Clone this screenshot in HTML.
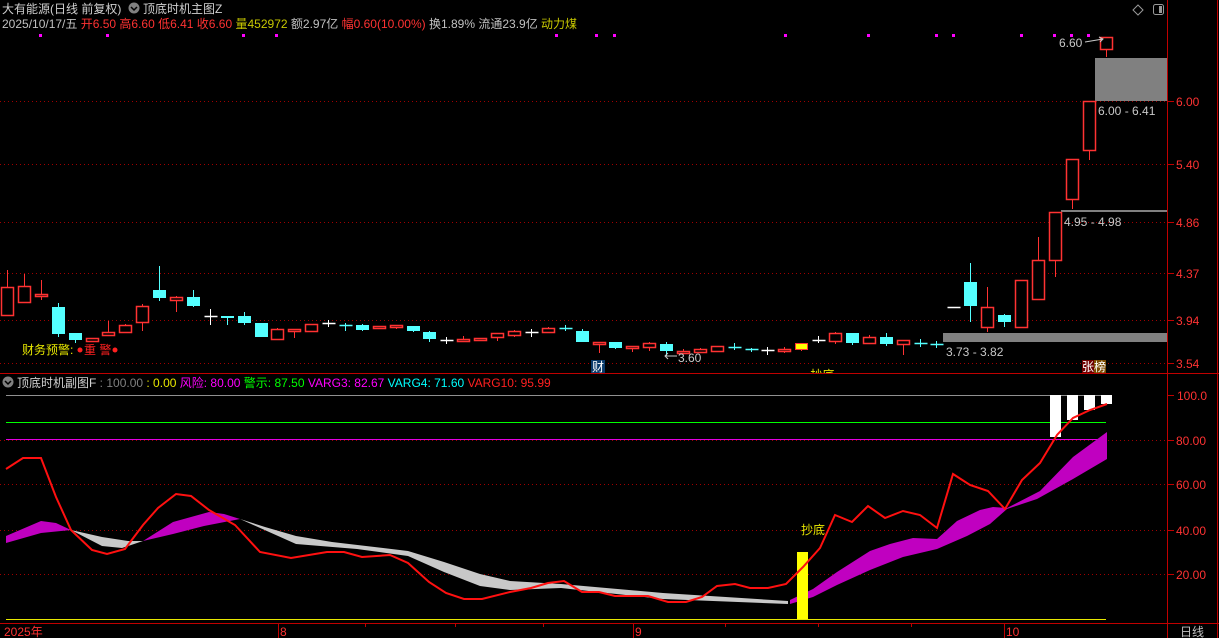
<!DOCTYPE html>
<html><head><meta charset="utf-8">
<style>
html,body{margin:0;padding:0;background:#000;}
body{width:1219px;height:638px;overflow:hidden;position:relative;font-family:"Liberation Sans","Noto Sans CJK SC",sans-serif;font-size:12px;}
svg{position:absolute;left:0;top:0;}
svg text{font-family:"Liberation Sans","Noto Sans CJK SC",sans-serif;font-size:12px;}
</style></head><body>
<svg id="s" width="1219" height="638" viewBox="0 0 1219 638" xmlns="http://www.w3.org/2000/svg">
<defs><clipPath id="cp"><rect x="0" y="0" width="1219" height="373"/></clipPath></defs>
<line x1="1167.5" y1="0" x2="1167.5" y2="638" stroke="#c00000"/>
<line x1="1217.5" y1="0" x2="1217.5" y2="638" stroke="#c00000"/>
<line x1="0" y1="373.5" x2="1219" y2="373.5" stroke="#c00000"/>
<line x1="0" y1="623.5" x2="1219" y2="623.5" stroke="#c00000"/>
<g stroke="#a00000" stroke-dasharray="1,3">
<line x1="0" y1="101.5" x2="1167" y2="101.5"/><line x1="0" y1="164.5" x2="1167" y2="164.5"/>
<line x1="0" y1="222.5" x2="1167" y2="222.5"/><line x1="0" y1="273.5" x2="1167" y2="273.5"/>
<line x1="0" y1="320.5" x2="1167" y2="320.5"/><line x1="0" y1="363.5" x2="1167" y2="363.5"/>
<line x1="0" y1="440.5" x2="1167" y2="440.5"/><line x1="0" y1="484.5" x2="1167" y2="484.5"/>
<line x1="0" y1="530.5" x2="1167" y2="530.5"/><line x1="0" y1="574.5" x2="1167" y2="574.5"/>
</g>
<g stroke="#c00000">
<line x1="1167" y1="101.5" x2="1174" y2="101.5"/><line x1="1167" y1="164.5" x2="1174" y2="164.5"/>
<line x1="1167" y1="222.5" x2="1174" y2="222.5"/><line x1="1167" y1="273.5" x2="1174" y2="273.5"/>
<line x1="1167" y1="320.5" x2="1174" y2="320.5"/><line x1="1167" y1="363.5" x2="1174" y2="363.5"/>
<line x1="1167" y1="395.5" x2="1174" y2="395.5"/><line x1="1167" y1="440.5" x2="1174" y2="440.5"/>
<line x1="1167" y1="484.5" x2="1174" y2="484.5"/><line x1="1167" y1="530.5" x2="1174" y2="530.5"/>
<line x1="1167" y1="574.5" x2="1174" y2="574.5"/>
<line x1="278.5" y1="623" x2="278.5" y2="638"/><line x1="633.5" y1="623" x2="633.5" y2="638"/><line x1="1004.5" y1="623" x2="1004.5" y2="638"/>
<line x1="365.5" y1="623" x2="365.5" y2="627"/><line x1="455.5" y1="623" x2="455.5" y2="627"/><line x1="543.5" y1="623" x2="543.5" y2="627"/><line x1="725.5" y1="623" x2="725.5" y2="627"/><line x1="818.5" y1="623" x2="818.5" y2="627"/><line x1="911.5" y1="623" x2="911.5" y2="627"/>
</g>
<g fill="#ff3232" font-size="13">
<text x="1176" y="106">6.00</text><text x="1176" y="169">5.40</text><text x="1176" y="227">4.86</text>
<text x="1176" y="278">4.37</text><text x="1176" y="325">3.94</text><text x="1176" y="368">3.54</text>
<text x="1177" y="400">100.0</text><text x="1176" y="445">80.00</text><text x="1176" y="489">60.00</text>
<text x="1176" y="535">40.00</text><text x="1176" y="579">20.00</text>
<text x="4" y="636">2025年</text><text x="280" y="636">8</text><text x="635" y="636">9</text><text x="1006" y="636">10</text>
</g>
<text x="1180" y="636" fill="#c0c0c0" font-size="13">日线</text>
<text x="2" y="13" fill="#d0d0d0" font-size="13">大有能源(日线 前复权)</text>
<circle cx="134" cy="8" r="5.5" fill="#808080"/><path d="M131 7 l3 3 l3 -3" stroke="#000" stroke-width="1.5" fill="none"/>
<text x="143" y="13" fill="#d0d0d0" font-size="13">顶底时机主图Z</text>
<text x="2" y="28" font-size="12.8"><tspan fill="#c0c0c0">2025/10/17/五 </tspan><tspan fill="#ff3232">开6.50 高6.60 低6.41 收6.60 </tspan><tspan fill="#c8c800">量452972 </tspan><tspan fill="#c0c0c0">额2.97亿 </tspan><tspan fill="#ff3232">幅0.60(10.00%) </tspan><tspan fill="#c0c0c0">换1.89% 流通23.9亿 </tspan><tspan fill="#c8c800">动力煤</tspan></text>
<path d="M1138 5 l5 5 l-5 5 l-5 -5z" stroke="#999" fill="none"/>
<rect x="1153.5" y="4.5" width="10" height="10" rx="2" stroke="#999" fill="none"/><rect x="1159" y="6" width="3" height="7" fill="#999"/>
<g id="dots" fill="#ff00ff"></g>
<rect x="1095" y="58" width="72" height="43" fill="#808080"/>
<rect x="1061" y="210" width="106" height="2" fill="#808080"/>
<rect x="943" y="333" width="224" height="9" fill="#808080"/>
<g id="candles"></g>
<g fill="#c8c8c8" font-size="12.5">
<text x="1059" y="47">6.60</text>
<text x="1098" y="115">6.00 - 6.41</text>
<text x="1064" y="226">4.95 - 4.98</text>
<text x="946" y="356">3.73 - 3.82</text>
<text x="678" y="362">3.60</text>
</g>
<path d="M1085 42 l18 -3 M1099 37 l4 2 l-3 3" stroke="#c8c8c8" fill="none"/>
<path d="M665 356 h12 M668 353 l-3 3 l3 3" stroke="#c8c8c8" fill="none"/>
<text x="22" y="354" fill="#e8e800" font-size="12.5">财务预警:</text>
<circle cx="80" cy="350" r="2.5" fill="#ff2020"/><text x="84" y="354" fill="#ff2020" font-size="12.5">重 警</text><circle cx="115" cy="350" r="2.5" fill="#ff2020"/>
<rect x="591" y="360" width="14" height="13" fill="#0a3a6a"/><text x="592" y="371" fill="#fff" font-size="12">财</text>
<rect x="1082" y="360" width="12" height="13" fill="#700000"/><rect x="1094" y="360" width="12" height="13" fill="#7a4a00"/>
<text x="1082" y="371" fill="#fff" font-size="12">张榜</text>
<text x="803" y="379" fill="#e8e800" font-size="12" clip-path="url(#cp)">- 抄底</text>
<circle cx="8" cy="382" r="5.5" fill="#808080"/><path d="M5 381 l3 3 l3 -3" stroke="#000" stroke-width="1.5" fill="none"/>
<text x="17" y="387" font-size="12.5"><tspan fill="#d0d0d0">顶底时机副图F </tspan><tspan fill="#808080">: 100.00 </tspan><tspan fill="#e8e800">: 0.00 </tspan><tspan fill="#ff00ff">风险: 80.00 </tspan><tspan fill="#00ff00">警示: 87.50 </tspan><tspan fill="#ff00ff">VARG3: 82.67 </tspan><tspan fill="#00ffff">VARG4: 71.60 </tspan><tspan fill="#ff2020">VARG10: 95.99</tspan></text>
<line x1="6" y1="395.5" x2="1107" y2="395.5" stroke="#909090"/>
<line x1="6" y1="422.5" x2="1106" y2="422.5" stroke="#00ff00"/>
<line x1="6" y1="439.5" x2="1106" y2="439.5" stroke="#e000e0"/>
<line x1="6" y1="619.5" x2="1106" y2="619.5" stroke="#e8e800"/>
<polygon fill="#c000c0" points="6,536 41,521 56,523 71,530 41,533 6,543"/>
<polygon fill="#c8c8c8" points="71,530 102,537 128,541 143,541 122,548 102,546"/>
<polygon fill="#c000c0" points="143,541 173,522 209,512 224,514 240,519 204,526 173,534"/>
<polygon fill="#c8c8c8" points="240,519 265,527 296,536 332,542 408,551 444,562 480,574 510,581 561,584 663,593 788,601 788,604 663,599 561,588 510,590 480,586 444,572 408,556 357,549 296,544"/>
<polygon fill="#c000c0" points="790,600 813,589 837,572 870,551 890,544 913,538 937,539 957,521 980,510 993,507 1007,508 1040,491 1073,457 1107,432 1107,459 1073,479 1037,499 1007,509 990,524 967,536 937,549 903,557 870,570 837,585 813,597 790,604"/>
<rect x="797" y="552" width="11" height="67" fill="#ffff00"/>
<text x="801" y="534" fill="#e8e800" font-size="13">抄底</text>
<g fill="#fff">
<rect x="1050" y="395" width="11" height="42"/><rect x="1067" y="395" width="11" height="25"/>
<rect x="1084" y="395" width="11" height="15"/><rect x="1101" y="395" width="11" height="9"/>
</g>
<polyline fill="none" stroke="#ff1010" stroke-width="2" points="6,469 23,458 41,458 56,497 71,530 92,550 107,554 125,549 143,525 158,508 176,494 191,496 209,510 235,525 260,552 291,558 327,552 344,552 362,557 390,555 408,563 429,582 446,593 464,599 482,599 510,592 531,588 548,583 564,581 582,592 599,592 615,596 648,596 668,602 686,602 702,597 717,586 735,584 750,588 768,588 786,584 803,567 820,548 835,515 852,522 868,506 885,518 903,511 920,515 937,528 953,474 970,485 988,491 1005,509 1022,480 1040,463 1057,435 1073,418 1090,410 1107,404"/>
</svg>
<script>
var NS="http://www.w3.org/2000/svg";
function el(p,t,a){var e=document.createElementNS(NS,t);for(var k in a)e.setAttribute(k,a[k]);p.appendChild(e);return e;}
var d=[[287,315,270,315,'r'],[286,302,274,303,'r'],[294,296,280,300,'r'],[307,334,303,337,'c'],[333,340,333,343,'c'],[338,341,338,341,'r'],[332,335,321,335,'r'],[325,332,324,333,'r'],[306,322,304,331,'r'],[290,298,266,301,'c'],[297,300,296,312,'r'],[297,306,290,307,'c'],[316,316,309,325,'w'],[316,318,316,325,'c'],[316,323,312,325,'c'],[323,337,323,337,'c'],[329,339,328,340,'r'],[329,331,329,338,'r'],[324,331,324,331,'r'],[323,323,320,327,'w'],[325,325,323,331,'q'],[325,330,324,331,'c'],[326,328,326,329,'r'],[325,327,325,329,'r'],[326,331,326,332,'c'],[332,339,331,342,'c'],[340,340,337,344,'w'],
[339,340,336,342,'r'],[338,340,338,341,'r'],[333,337,333,341,'r'],[331,335,330,337,'r'],[332,332,329,337,'w'],[328,332,327,333,'r'],[328,328,325,331,'q'],[331,342,329,342,'c'],[342,344,342,353,'r'],[342,348,342,349,'c'],[346,348,346,352,'r'],[343,347,342,351,'r'],[344,351,342,356,'c'],[351,352,349,353,'r'],[349,352,348,353,'r'],[346,351,346,351,'r'],[347,347,343,350,'q'],[349,350,348,352,'q'],[350,350,347,355,'w'],[349,351,347,353,'r'],[343,349,343,351,'y'],[340,340,336,343,'w'],[333,341,332,344,'r'],[333,343,333,345,'c'],[337,343,335,343,'r'],[337,344,333,346,'c'],[340,344,340,355,'r'],[343,343,339,347,'q'],[344,344,341,348,'q'],
[307,307,307,307,'w'],[282,306,263,322,'c'],[307,327,287,332,'r'],[315,322,314,327,'c'],[280,327,280,327,'r'],[260,299,237,300,'r'],[212,260,212,277,'r'],[159,199,159,209,'r'],[101,150,101,160,'r'],[37,49,37,57,'r']];
var g=document.getElementById('candles');
d.forEach(function(c,i){
 var x=Math.round(7+16.9*i)+0.5,t=c[4];
 var col=t=='r'?'#ff3232':(t=='c'||t=='q')?'#54ffff':t=='w'?'#ffffff':'#ff3232';
 el(g,'line',{x1:x,x2:x,y1:c[2],y2:c[3],stroke:col});
 if(t=='w'||t=='q'){el(g,'line',{x1:x-6,x2:x+7,y1:c[0]+.5,y2:c[0]+.5,stroke:col,'stroke-width':1.5});return;}
 var h=Math.max(c[1]-c[0],2);
 if(t=='r')el(g,'rect',{x:x-6,y:c[0]+.5,width:12,height:h,fill:'#000',stroke:col,'stroke-width':1.5});
 else if(t=='c')el(g,'rect',{x:x-6.5,y:c[0],width:13,height:h,fill:col});
 else el(g,'rect',{x:x-6,y:c[0]+.5,width:12,height:h,fill:'#ffff00',stroke:'#ff3232'});
});
var dg=document.getElementById('dots');
[40,107,243,276,556,596,614,785,868,936,953,1021,1054,1071,1088].forEach(function(x){el(dg,'rect',{x:x-1,y:34,width:3,height:3});});
</script>
</body></html>
